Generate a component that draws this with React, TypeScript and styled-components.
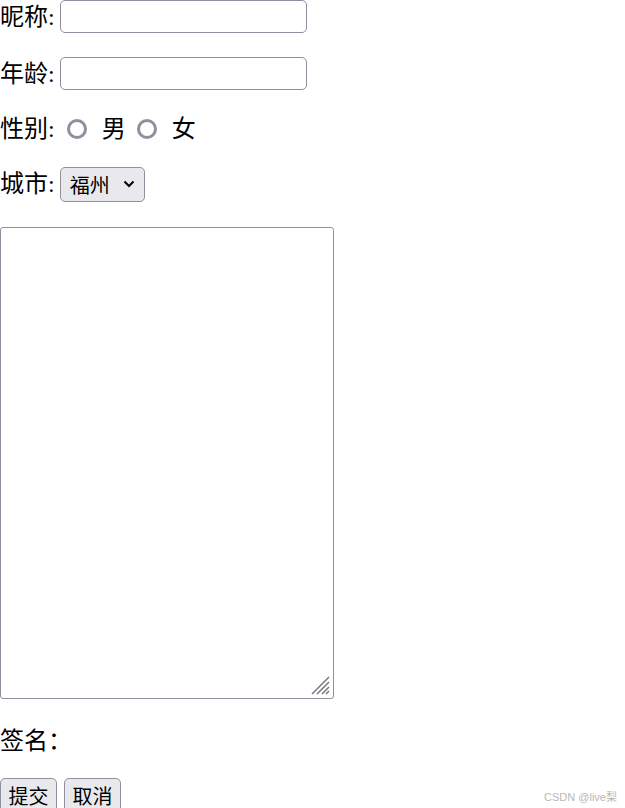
import React from "react";
import styled, { createGlobalStyle } from "styled-components";

const Global = createGlobalStyle`
  html, body { margin: 0; padding: 0; background: #fff; }
  body { font-family: "Liberation Serif", "Noto Sans CJK SC", serif; color: #000; }
`;

const Page = styled.form`
  position: relative;
  width: 625px;
  height: 808px;
  overflow: hidden;
  display: flex;
  flex-direction: column;
  align-items: flex-start;
  & > * { flex-shrink: 0; }
`;

const Row = styled.div<{ $top: number; $h?: number }>`
  display: flex;
  align-items: center;
  margin-top: ${(p) => p.$top}px;
  height: ${(p) => p.$h ?? 33}px;
  font-size: 24px;
  line-height: 1;
`;

const Label = styled.span`
  font-family: "Liberation Serif", "Noto Sans CJK SC", serif;
  font-size: 24px;
  margin-right: 5px;
`;

const TextInput = styled.input`
  appearance: none;
  box-sizing: border-box;
  width: 247px;
  height: 33px;
  margin: 0;
  border: 1.5px solid #8f8f9d;
  border-radius: 5px;
  background: #fff;
  padding: 0 4px;
  font-size: 20px;
  font-family: "Liberation Sans", "Noto Sans CJK SC", sans-serif;
`;

const Radio = styled.input`
  appearance: none;
  box-sizing: border-box;
  width: 20px;
  height: 20px;
  margin: 0 15px 0 7px;
  border: 3px solid #8f8f9d;
  border-radius: 50%;
  background: #fff;
`;

const RadioText = styled.span`
  font-size: 24px;
  margin-right: 4px;
`;

const SelectWrap = styled.div`
  position: relative;
  display: inline-flex;
`;

const Select = styled.select`
  appearance: none;
  box-sizing: border-box;
  width: 85px;
  height: 35px;
  margin: 0;
  padding: 0 0 0 9px;
  border: 1.5px solid #8f8f9d;
  border-radius: 5px;
  background: #e9e9ed;
  color: #000;
  font-size: 20px;
  font-family: "Noto Sans CJK SC", sans-serif;
`;

const Chevron = styled.svg`
  position: absolute;
  right: 10px;
  top: 13px;
  pointer-events: none;
`;

const AreaWrap = styled.div`
  position: relative;
  margin-top: 26px;
`;

const Area = styled.textarea`
  display: block;
  box-sizing: border-box;
  width: 334px;
  height: 472px;
  margin: 0;
  border: 1.5px solid #8f8f9d;
  border-radius: 3px;
  resize: none;
  background: #fff;
`;

const Grip = styled.svg`
  position: absolute;
  right: 4px;
  bottom: 4px;
  pointer-events: none;
`;

const Buttons = styled.div`
  display: flex;
  gap: 7px;
  margin-top: 21px;
`;

const Button = styled.button`
  box-sizing: border-box;
  height: 36px;
  width: 57px;
  margin: 0;
  padding: 0;
  border: 1.5px solid #8f8f9d;
  border-radius: 5px;
  background: #e9e9ed;
  color: #000;
  font-size: 20px;
  font-family: "Noto Sans CJK SC", sans-serif;
  line-height: 1;
  display: flex;
  justify-content: center;
  align-items: center;
`;

const Watermark = styled.div`
  position: absolute;
  right: 8px;
  bottom: 4px;
  font-size: 11px;
  color: #b8b8b8;
  font-family: "Liberation Sans", "Noto Sans CJK SC", sans-serif;
`;

export default function App() {
  return (
    <>
      <Global />
      <Page onSubmit={(e) => e.preventDefault()}>
        <Row $top={0}>
          <Label>昵称:</Label>
          <TextInput type="text" />
        </Row>
        <Row $top={24}>
          <Label>年龄:</Label>
          <TextInput type="text" />
        </Row>
        <Row $top={22}>
          <Label>性别:</Label>
          <Radio type="radio" name="sex" />
          <RadioText>男</RadioText>
          <Radio type="radio" name="sex" />
          <RadioText>女</RadioText>
        </Row>
        <Row $top={22} $h={34}>
          <Label>城市:</Label>
          <SelectWrap>
            <Select defaultValue="福州">
              <option>福州</option>
              <option>厦门</option>
            </Select>
            <Chevron width="12" height="8" viewBox="0 0 12 8">
              <path d="M1.5 1.5 L6 6 L10.5 1.5" fill="none" stroke="#000" strokeWidth="2" />
            </Chevron>
          </SelectWrap>
        </Row>
        <AreaWrap>
          <Area />
          <Grip width="20" height="20" viewBox="0 0 20 20">
            <path d="M19 2 L2 19 M19 7 L7 19 M19 12 L12 19 M19 16 L16 19" stroke="#777" strokeWidth="1.5" />
          </Grip>
        </AreaWrap>
        <Row $top={25}>
          <Label>签名：</Label>
        </Row>
        <Buttons>
          <Button type="submit">提交</Button>
          <Button type="button">取消</Button>
        </Buttons>
        <Watermark>CSDN @live梨</Watermark>
      </Page>
    </>
  );
}
